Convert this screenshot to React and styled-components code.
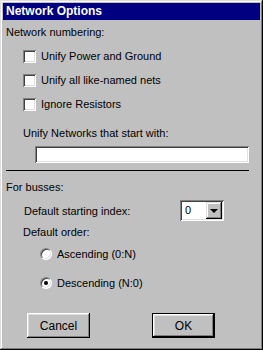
import React, { useState } from "react";
import styled, { createGlobalStyle } from "styled-components";

const Global = createGlobalStyle`
  html, body {
    margin: 0;
    padding: 0;
    background: #c0c0c0;
  }
  * {
    box-sizing: border-box;
  }
`;

const Window = styled.div`
  width: 263px;
  height: 350px;
  background: #c0c0c0;
  padding: 3px;
  box-shadow: inset -1px -1px #000, inset 1px 1px #dfdfdf,
    inset -2px -2px #808080, inset 2px 2px #fff;
  font-family: "Liberation Sans", Arial, sans-serif;
  font-size: 11px;
  color: #000;
  display: flex;
  flex-direction: column;
`;

const TitleBar = styled.div`
  height: 17px;
  background: #000080;
  color: #fff;
  font-weight: bold;
  font-size: 12px;
  line-height: 17px;
  padding-left: 3px;
`;

const Body = styled.div`
  display: flex;
  flex-direction: column;
  padding: 0 10px 0 3px;
`;

const Label = styled.div`
  height: 13px;
  line-height: 13px;
  margin-top: ${(p) => p.top || 0}px;
  margin-left: ${(p) => p.indent || 0}px;
  white-space: nowrap;
`;

const OptionRow = styled.label`
  display: flex;
  align-items: center;
  height: ${(p) => p.h || 24}px;
  margin-left: ${(p) => p.indent || 0}px;
  gap: 5px;
`;

const Box = styled.span`
  width: 13px;
  height: 13px;
  background: #fff;
  flex: none;
  box-shadow: inset 1px 1px #808080, inset -1px -1px #fff,
    inset 2px 2px #404040, inset -2px -2px #dfdfdf;
`;

const Radio = styled.span`
  width: 12px;
  height: 12px;
  border-radius: 50%;
  flex: none;
  background: #fff;
  border: 1px solid;
  border-color: #808080 #fff #fff #808080;
  box-shadow: inset 1px 1px #404040, inset -1px -1px #dfdfdf;
  display: flex;
  align-items: center;
  justify-content: center;
  &::after {
    content: "";
    width: 4px;
    height: 4px;
    border-radius: 50%;
    background: ${(p) => (p.checked ? "#000" : "transparent")};
  }
`;

const Input = styled.input`
  display: block;
  width: 214px;
  height: 17px;
  margin: 6px 0 0 29px;
  border: none;
  outline: none;
  background: #fff;
  padding: 2px 4px;
  font: inherit;
  box-shadow: inset 1px 1px #808080, inset -1px -1px #fff,
    inset 2px 2px #404040, inset -2px -2px #dfdfdf;
`;

const Separator = styled.div`
  height: 1px;
  background: #000;
  width: 243px;
  margin-top: 7px;
`;

const IndexRow = styled.div`
  display: flex;
  align-items: center;
  justify-content: space-between;
  margin: 6px 26px 0 18px;
  height: 21px;
`;

const Select = styled.div`
  width: 44px;
  height: 21px;
  background: #fff;
  padding: 2px;
  display: flex;
  align-items: stretch;
  box-shadow: inset 1px 1px #808080, inset -1px -1px #fff,
    inset 2px 2px #404040, inset -2px -2px #dfdfdf;
`;

const SelectValue = styled.span`
  flex: 1;
  padding-left: 3px;
  line-height: 17px;
`;

const DropButton = styled.span`
  width: 16px;
  background: #c0c0c0;
  display: flex;
  align-items: center;
  justify-content: center;
  box-shadow: inset -1px -1px #000, inset 1px 1px #dfdfdf,
    inset -2px -2px #808080, inset 2px 2px #fff;
  &::after {
    content: "";
    border-left: 4px solid transparent;
    border-right: 4px solid transparent;
    border-top: 4px solid #000;
    margin-top: 1px;
  }
`;

const Buttons = styled.div`
  display: flex;
  margin: 16px 0 0 21px;
  gap: 62px;
`;

const Button = styled.button`
  width: 63px;
  height: 25px;
  background: #c0c0c0;
  border: ${(p) => (p.primary ? "1px solid #000" : "none")};
  padding: 0;
  font: inherit;
  font-size: 12px;
  color: #000;
  box-shadow: inset -1px -1px #000, inset 1px 1px #fff,
    inset -2px -2px #808080, inset 2px 2px #dfdfdf;
`;

const checks = [
  "Unify Power and Ground",
  "Unify all like-named nets",
  "Ignore Resistors",
];

const App = () => {
  const [order, setOrder] = useState("desc");
  return (
    <>
      <Global />
      <Window>
        <TitleBar>Network Options</TitleBar>
        <Body>
          <Label top={6}>Network numbering:</Label>
          <div style={{ marginTop: 5 }}>
            {checks.map((c) => (
              <OptionRow key={c} indent={17}>
                <Box />
                {c}
              </OptionRow>
            ))}
          </div>
          <Label top={11} indent={17}>
            Unify Networks that start with:
          </Label>
          <Input />
          <Separator />
          <Label top={10}>For busses:</Label>
          <IndexRow>
            <span>Default starting index:</span>
            <Select>
              <SelectValue>0</SelectValue>
              <DropButton />
            </Select>
          </IndexRow>
          <Label top={5} indent={17}>
            Default order:
          </Label>
          <div>
            <OptionRow h={29} indent={34} onClick={() => setOrder("asc")}>
              <Radio checked={order === "asc"} />
              Ascending (0:N)
            </OptionRow>
            <OptionRow h={29} indent={34} onClick={() => setOrder("desc")}>
              <Radio checked={order === "desc"} />
              Descending (N:0)
            </OptionRow>
          </div>
          <Buttons>
            <Button>Cancel</Button>
            <Button primary>OK</Button>
          </Buttons>
        </Body>
      </Window>
    </>
  );
};

export default App;
